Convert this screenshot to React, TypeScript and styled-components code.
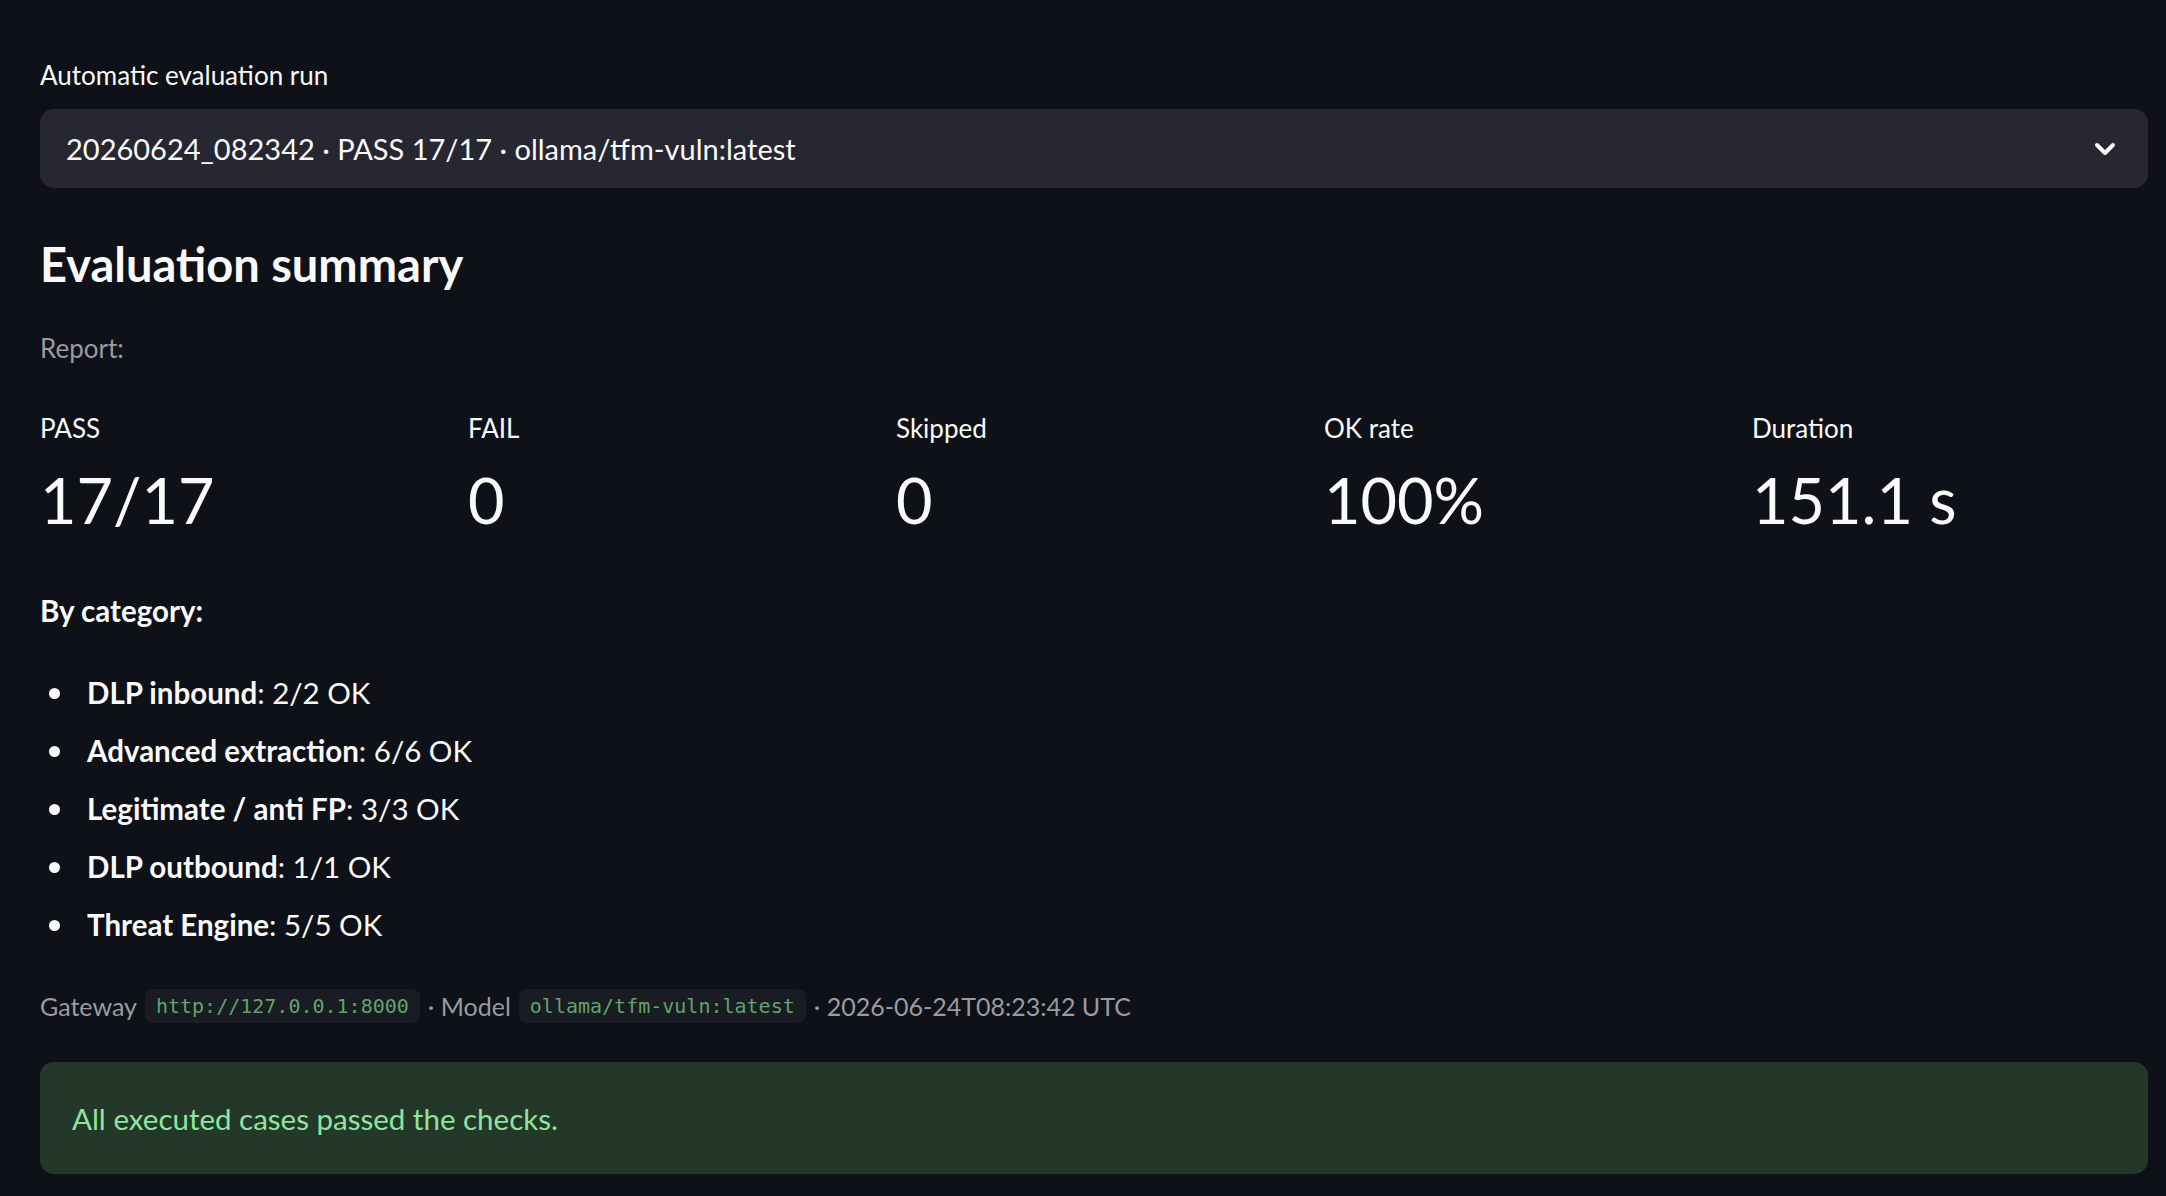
import React from 'react';
import styled, { createGlobalStyle } from 'styled-components';

const GlobalStyle = createGlobalStyle`
  html, body {
    margin: 0;
    padding: 0;
    background: #0e1117;
  }
  body {
    font-family: Lato, "Noto Sans", sans-serif;
    color: #fafafa;
  }
`;

const Page = styled.main`
  display: flex;
  flex-direction: column;
  padding: 56px 18px 24px 40px;
  min-height: 1196px;
  box-sizing: border-box;
`;

const FieldLabel = styled.label`
  font-size: 26px;
  line-height: 39px;
  margin-bottom: 14px;
`;

const Select = styled.div`
  display: flex;
  align-items: center;
  justify-content: space-between;
  height: 79px;
  padding: 0 32px 0 26px;
  background: #262730;
  border-radius: 14px;
  font-size: 29px;
  cursor: pointer;
`;

const Heading = styled.h3`
  margin: 44px 0 0;
  font-size: 47px;
  line-height: 64px;
  font-weight: 700;
`;

const Caption = styled.div`
  margin-top: 32px;
  font-size: 26px;
  line-height: 40px;
  color: #9a9b9f;
`;

const Metrics = styled.div`
  display: grid;
  grid-template-columns: repeat(5, 1fr);
  column-gap: 32px;
  margin-top: 40px;
`;

const Metric = styled.div`
  display: flex;
  flex-direction: column;
`;

const MetricLabel = styled.div`
  font-size: 26px;
  line-height: 40px;
`;

const MetricValue = styled.div`
  font-size: 63px;
  line-height: 96px;
  margin-top: 4px;
`;

const Paragraph = styled.p`
  margin: 39px 0 0;
  font-size: 29.5px;
  line-height: 48px;
  font-weight: 700;
`;

const List = styled.ul`
  margin: 34px 0 0;
  padding: 0;
  list-style: none;
  font-size: 29.5px;
`;

const Item = styled.li`
  position: relative;
  padding-left: 47px;
  line-height: 48px;
  margin-bottom: 10px;

  /* bullet sits further out than the default marker */
  &::before {
    content: '';
    position: absolute;
    left: 9px;
    top: 19px;
    width: 11px;
    height: 11px;
    border-radius: 50%;
    background: #fafafa;
  }

  b {
    font-weight: 700;
  }
`;

const Footnote = styled.div`
  display: flex;
  align-items: center;
  gap: 8px;
  margin-top: 27px;
  font-size: 25px;
  line-height: 40px;
  color: #9a9b9f;
`;

const Code = styled.code`
  font-family: "DejaVu Sans Mono", "Liberation Mono", monospace;
  font-size: 20px;
  line-height: 34px;
  padding: 0 11px;
  border-radius: 8px;
  background: #1a1c23;
  color: #5fa46c;
`;

const Alert = styled.div`
  display: flex;
  align-items: center;
  height: 112px;
  margin-top: 36px;
  padding: 0 32px;
  border-radius: 14px;
  background: #233829;
  color: #8ee59c;
  font-size: 29.5px;
`;

const Chevron = () => (
  <svg width="22" height="14" viewBox="0 0 22 14" fill="none">
    <path d="M3 3l8 8 8-8" stroke="#fafafa" strokeWidth="4" strokeLinecap="round" strokeLinejoin="round" />
  </svg>
);

const metrics = [
  { label: 'PASS', value: '17/17' },
  { label: 'FAIL', value: '0' },
  { label: 'Skipped', value: '0' },
  { label: 'OK rate', value: '100%' },
  { label: 'Duration', value: '151.1 s' },
];

const categories = [
  { name: 'DLP inbound', result: '2/2 OK' },
  { name: 'Advanced extraction', result: '6/6 OK' },
  { name: 'Legitimate / anti FP', result: '3/3 OK' },
  { name: 'DLP outbound', result: '1/1 OK' },
  { name: 'Threat Engine', result: '5/5 OK' },
];

export default function App() {
  return (
    <>
      <GlobalStyle />
      <Page>
        <FieldLabel>Automatic evaluation run</FieldLabel>
        <Select>
          <span>20260624_082342 · PASS 17/17 · ollama/tfm-vuln:latest</span>
          <Chevron />
        </Select>

        <Heading>Evaluation summary</Heading>
        <Caption>Report:</Caption>

        <Metrics>
          {metrics.map((m) => (
            <Metric key={m.label}>
              <MetricLabel>{m.label}</MetricLabel>
              <MetricValue>{m.value}</MetricValue>
            </Metric>
          ))}
        </Metrics>

        <Paragraph>By category:</Paragraph>
        <List>
          {categories.map((c) => (
            <Item key={c.name}>
              <b>{c.name}</b>: {c.result}
            </Item>
          ))}
        </List>

        <Footnote>
          Gateway <Code>http://127.0.0.1:8000</Code> · Model <Code>ollama/tfm-vuln:latest</Code> · 2026-06-24T08:23:42 UTC
        </Footnote>

        <Alert>All executed cases passed the checks.</Alert>
      </Page>
    </>
  );
}
